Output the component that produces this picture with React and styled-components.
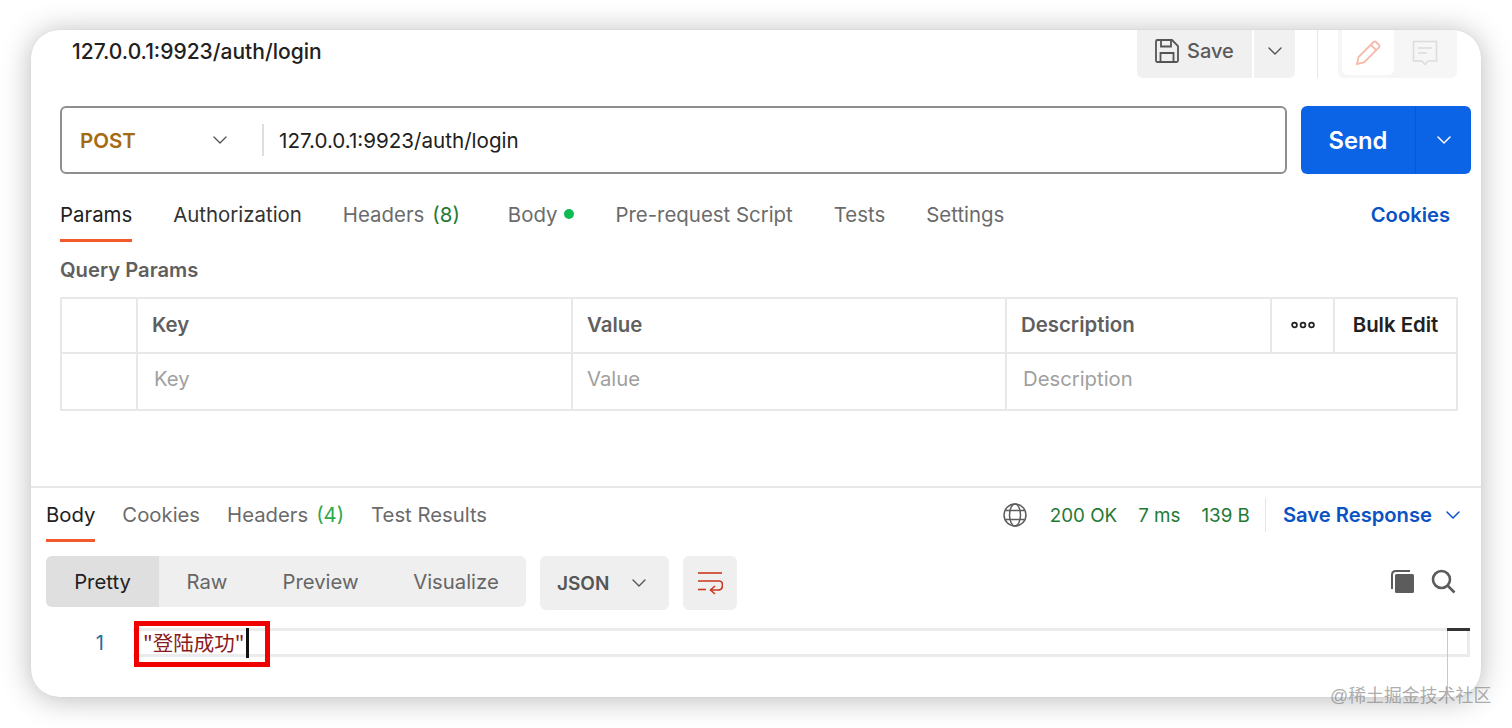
import styled, { createGlobalStyle } from "styled-components";
import { ChevronDown } from "lucide-react";

const GlobalStyle = createGlobalStyle`
  html, body {
    margin: 0;
    padding: 0;
    background: #fff;
    height: 100%;
  }
  body {
    font-family: Inter, "Noto Sans CJK SC", sans-serif;
    overflow: hidden;
  }
`;

const Page = styled.div`
  position: relative;
  width: 1512px;
  height: 728px;
  padding: 30px 31px 31px;
  box-sizing: border-box;
`;

const Card = styled.div`
  position: relative;
  height: 667px;
  background: #fff;
  border-radius: 28px;
  box-shadow: 0 0 1px rgba(0, 0, 0, 0.12), 0 2px 30px rgba(0, 0, 0, 0.28);
  display: flex;
  flex-direction: column;
`;

const TitleBar = styled.div`
  height: 76px;
  display: flex;
  align-items: flex-start;
  padding: 0 24px 0 41px;
`;

const Title = styled.div`
  font-size: 21px;
  font-weight: 500;
  color: #212121;
  line-height: 44px;
  flex: 1;
`;

const SaveGroup = styled.div`
  display: flex;
  gap: 2px;
  height: 48px;
`;

const SaveBtn = styled.div`
  width: 115px;
  background: #f0f0f0;
  border-radius: 0 0 0 6px;
  display: flex;
  align-items: center;
  padding: 0 0 6px 17px;
  box-sizing: border-box;
  gap: 7px;
  font-size: 20px;
  font-weight: 500;
  color: #5a5a5a;
`;

const SaveArrow = styled.div`
  width: 41px;
  background: #f1f1f1;
  border-radius: 0 0 6px 0;
  display: flex;
  align-items: center;
  justify-content: center;
  padding-bottom: 6px;
  box-sizing: border-box;
  color: #555;
`;

const VSep = styled.div`
  width: 1px;
  height: 48px;
  background: #e6e6e6;
  margin: 0 20px 0 22px;
`;

const IconTray = styled.div`
  width: 119px;
  height: 48px;
  background: #f6f6f6;
  border-radius: 0 0 6px 6px;
  display: flex;
  padding-left: 4px;
  box-sizing: border-box;
`;

const IconCell = styled.div`
  width: 53px;
  height: 45px;
  background: ${(p) => (p.$active ? "#fff" : "transparent")};
  border-radius: 0 0 6px 6px;
  display: flex;
  align-items: center;
  justify-content: center;
  margin-right: 6px;
`;

const RequestRow = styled.div`
  display: flex;
  gap: 14px;
  padding: 0 10px 0 29px;
  height: 68px;
`;

const UrlBox = styled.div`
  flex: 1;
  border: 2px solid #8f8f8f;
  border-radius: 6px;
  display: flex;
  align-items: center;
  box-sizing: border-box;
`;

const Method = styled.div`
  width: 202px;
  padding-left: 18px;
  box-sizing: border-box;
  display: flex;
  align-items: center;
  justify-content: space-between;
  padding-right: 30px;
  font-size: 20.5px;
  font-weight: 600;
  color: #a46a12;
  border-right: 2px solid #dedede;
  height: 32px;
`;

const UrlText = styled.div`
  padding-left: 15px;
  font-size: 20.6px;
  color: #212121;
`;

const SendBtn = styled.div`
  width: 170px;
  background: #0b63e5;
  border-radius: 6px;
  color: #fff;
  display: flex;
  font-size: 23.8px;
  font-weight: 600;
`;

const SendLabel = styled.div`
  width: 114px;
  display: flex;
  align-items: center;
  justify-content: center;
  border-right: 1px solid #0a58cc;
`;

const SendArrow = styled.div`
  flex: 1;
  display: flex;
  align-items: center;
  justify-content: center;
`;

const ReqTabs = styled.div`
  height: 68px;
  display: flex;
  padding: 0 31px 0 29px;
  font-size: 20.4px;
`;

const TabList = styled.div`
  display: flex;
  flex: 1;
  gap: ${(p) => p.$gap}px;
`;

const Tab = styled.div`
  position: relative;
  display: flex;
  align-items: center;
  gap: ${(p) => p.$gap || 0}px;
  height: 68px;
  padding-top: 18px;
  padding-bottom: 6px;
  box-sizing: border-box;
  color: ${(p) => (p.$on ? "#212121" : p.$mid ? "#333" : "#6b6b6b")};
  margin-right: ${(p) => p.$mr || 0}px;
  ${(p) =>
    p.$on &&
    `&::after {
      content: "";
      position: absolute;
      left: 0;
      right: 0;
      bottom: 0;
      height: 3px;
      background: #f4592c;
    }`}
`;

const Count = styled.span`
  color: ${(p) => p.$c};
`;

const Dot = styled.span`
  width: 10px;
  height: 10px;
  border-radius: 50%;
  background: #0cbb52;
`;

const CookiesLink = styled.div`
  display: flex;
  align-items: center;
  padding-top: 18px;
  padding-bottom: 6px;
  color: #0b52c4;
  font-weight: 600;
  font-size: 20.2px;
`;

const SectionLabel = styled.div`
  padding: 16px 0 0 29px;
  height: 55px;
  box-sizing: border-box;
  font-size: 20.2px;
  font-weight: 600;
  color: #5f5f5f;
  line-height: 24px;
`;

const Table = styled.div`
  margin: 0 23px 0 29px;
  border: 2px solid #e8e8e8;
  display: grid;
  grid-template-columns: 76px 435px 434px 265px 63px 1fr;
  grid-template-rows: 55px 55px;
  box-sizing: border-box;
  height: 114px;
`;

const HeadCell = styled.div`
  display: flex;
  align-items: center;
  padding: 0 0 2px ${(p) => p.$pl ?? 14}px;
  box-sizing: border-box;
  border-right: ${(p) => (p.$last ? "none" : "2px solid #e8e8e8")};
  border-bottom: 2px solid #e8e8e8;
  font-size: 20.4px;
  font-weight: 600;
  color: ${(p) => p.$c || "#5f5f5f"};
  justify-content: ${(p) => (p.$center ? "center" : "flex-start")};
`;

const BodyCell = styled.div`
  display: flex;
  align-items: center;
  padding: 0 0 6px ${(p) => p.$pl ?? 14}px;
  box-sizing: border-box;
  border-right: ${(p) => (p.$last ? "none" : "2px solid #e8e8e8")};
  grid-column: ${(p) => p.$span || "auto"};
  font-size: 20.3px;
  color: #a0a0a0;
`;

const Spacer = styled.div`
  height: 75px;
  flex-shrink: 0;
`;

const ResponseHead = styled.div`
  border-top: 2px solid #e8e8e8;
  height: 54px;
  display: flex;
  padding: 0 31px 0 15px;
  font-size: 20.3px;
`;

const RespTab = styled(Tab)`
  height: 54px;
  padding: 0 0 1px;
`;

const RespStats = styled.div`
  display: flex;
  align-items: center;
  color: #1f7a35;
  font-size: 18.8px;
  height: 54px;
`;

const Stat = styled.span`
  margin-left: ${(p) => p.$ml}px;
`;

const StatSep = styled.div`
  width: 1px;
  height: 34px;
  background: #e4e4e4;
  margin: 0 17px 0 15px;
`;

const SaveResponse = styled.div`
  color: #0b52c4;
  font-weight: 600;
  font-size: 20.2px;
  display: flex;
  align-items: center;
  gap: 9px;
  margin-right: -15px;
  padding-bottom: 1px;
`;

const Toolbar = styled.div`
  margin-top: 14px;
  height: 54px;
  display: flex;
  align-items: flex-start;
  padding: 0 25px 0 15px;
`;

const Segmented = styled.div`
  display: flex;
  height: 51px;
  width: 480px;
  background: #efefef;
  border-radius: 6px;
  overflow: hidden;
  font-size: 20.3px;
  color: #666;
`;

const Segment = styled.div`
  width: ${(p) => p.$w}px;
  background: ${(p) => (p.$on ? "#dfdfdf" : "transparent")};
  color: ${(p) => (p.$on ? "#212121" : "#666")};
  display: flex;
  align-items: center;
  justify-content: center;
`;

const JsonSelect = styled.div`
  margin-left: 14px;
  width: 129px;
  height: 54px;
  background: #efefef;
  border-radius: 6px;
  display: flex;
  align-items: center;
  justify-content: space-between;
  padding: 0 18px 0 17px;
  box-sizing: border-box;
  font-size: 19px;
  font-weight: 600;
  color: #555;
`;

const WrapBtn = styled.div`
  margin-left: 14px;
  width: 54px;
  height: 54px;
  background: #efefef;
  border-radius: 6px;
  display: flex;
  align-items: center;
  justify-content: center;
`;

const ToolIcons = styled.div`
  margin-left: auto;
  display: flex;
  gap: 16px;
  height: 50px;
  align-items: center;
`;

const Editor = styled.div`
  position: relative;
  margin-top: 18px;
  display: flex;
  height: 29px;
  padding-right: 11px;
`;

const LineNo = styled.div`
  width: 102px;
  padding-right: 29px;
  box-sizing: border-box;
  text-align: right;
  font-size: 20px;
  line-height: 31px;
  color: #21709a;
  flex-shrink: 0;
`;

const CodeLine = styled.div`
  flex: 1;
  border: solid #ebebeb;
  border-width: 3px 3px 3px 0;
  display: flex;
  align-items: center;
  padding-left: 10px;
  color: #8b1a1a;
  box-sizing: border-box;
`;

const CodeText = styled.span`
  font-family: "Noto Sans CJK SC", sans-serif;
  font-size: 20.5px;
  line-height: 23px;
`;

const Caret = styled.span`
  position: absolute;
  left: 215px;
  top: 0;
  width: 3px;
  height: 30px;
  background: #111;
`;

const RedBox = styled.div`
  position: absolute;
  left: 103px;
  top: -7px;
  width: 136px;
  height: 46px;
  border: 5px solid #f10000;
  box-sizing: border-box;
`;

const ScrollTick = styled.div`
  position: absolute;
  right: 11px;
  top: 0;
  width: 23px;
  height: 3px;
  background: #333;
`;

const ScrollLine = styled.div`
  position: absolute;
  right: 33px;
  top: 3px;
  width: 1px;
  height: 60px;
  background: #c9c9c9;
`;

const Watermark = styled.div`
  position: absolute;
  left: 1330px;
  top: 684px;
  font-size: 17.9px;
  line-height: 24px;
  color: rgba(120, 120, 120, 0.62);
  font-family: "Liberation Sans", "Noto Sans CJK SC", sans-serif;
  white-space: nowrap;
`;

function SaveIcon() {
  return (
    <svg width="26" height="26" viewBox="0 0 26 26" fill="none" stroke="#555" strokeWidth="1.8">
      <path d="M2 3.5 a1.5 1.5 0 0 1 1.5-1.5 H18 L24 8 V22.5 a1.5 1.5 0 0 1-1.5 1.5 H3.5 A1.5 1.5 0 0 1 2 22.5 Z" />
      <path d="M7 2 V8.5 H17 V2" />
      <path d="M6.5 24 V15 H19.5 V24" />
    </svg>
  );
}

function PencilIcon() {
  return (
    <svg width="26" height="26" viewBox="0 0 26 26" fill="none" stroke="#f7b9aa" strokeWidth="1.8">
      <path d="M2 24 L3.5 17 L18.5 2 Q20 1 21 2 L24 5 Q25 6 24 7.5 L9 22.5 Z" />
      <path d="M16 5 L21 10" />
    </svg>
  );
}

function CommentIcon() {
  return (
    <svg width="26" height="26" viewBox="0 0 26 26" fill="none" stroke="#dcdcdc" strokeWidth="1.6">
      <path d="M1.5 1.5 H24.5 V21 H16 L13 24.5 L10 21 H1.5 Z" />
      <path d="M6 8 H20 M6 13 H15" />
    </svg>
  );
}

function DotsIcon() {
  return (
    <svg width="24" height="8" viewBox="0 0 24 8" fill="none" stroke="#222" strokeWidth="1.7">
      <circle cx="3.5" cy="4" r="2.4" />
      <circle cx="12" cy="4" r="2.4" />
      <circle cx="20.5" cy="4" r="2.4" />
    </svg>
  );
}

function GlobeIcon() {
  return (
    <svg width="24" height="24" viewBox="0 0 24 24" fill="none" stroke="#5c5c5c" strokeWidth="1.5">
      <circle cx="12" cy="12" r="11" />
      <ellipse cx="12" cy="12" rx="5.5" ry="11" />
      <path d="M2.5 7.5 H21.5 M2.5 16.5 H21.5" />
    </svg>
  );
}

function WrapIcon() {
  return (
    <svg width="26" height="24" viewBox="0 0 26 24" fill="none" stroke="#c8391f" strokeWidth="1.6">
      <path d="M1 2 H25" />
      <path d="M1 10 H22 Q25.5 10 25.5 14 Q25.5 19 21 19 H14" />
      <path d="M1 18.5 H9" />
      <path d="M18 15 L13.5 19 L18 23" />
    </svg>
  );
}

function CopyIcon() {
  return (
    <svg width="25" height="25" viewBox="0 0 25 25">
      <path d="M6 1 H20 V3 H6 Q3 3 3 6 V20 H1 V6 Q1 1 6 1 Z" fill="#5c5c5c" />
      <rect x="5" y="5" width="19" height="19" rx="1.5" fill="#5c5c5c" />
    </svg>
  );
}

function SearchIcon() {
  return (
    <svg width="25" height="25" viewBox="0 0 25 25" fill="none" stroke="#5c5c5c" strokeWidth="2.6">
      <circle cx="10.5" cy="10.5" r="8.5" />
      <path d="M16.5 16.5 L23.5 23.5" />
    </svg>
  );
}

export default function App() {
  return (
    <>
      <GlobalStyle />
      <Page>
        <Card>
          <TitleBar>
            <Title>127.0.0.1:9923/auth/login</Title>
            <SaveGroup>
              <SaveBtn>
                <SaveIcon />
                Save
              </SaveBtn>
              <SaveArrow>
                <ChevronDown size={24} strokeWidth={1.4} />
              </SaveArrow>
            </SaveGroup>
            <VSep />
            <IconTray>
              <IconCell $active>
                <PencilIcon />
              </IconCell>
              <IconCell>
                <CommentIcon />
              </IconCell>
            </IconTray>
          </TitleBar>

          <RequestRow>
            <UrlBox>
              <Method>
                POST
                <ChevronDown size={24} strokeWidth={1.4} color="#555" />
              </Method>
              <UrlText>127.0.0.1:9923/auth/login</UrlText>
            </UrlBox>
            <SendBtn>
              <SendLabel>Send</SendLabel>
              <SendArrow>
                <ChevronDown size={24} strokeWidth={1.5} />
              </SendArrow>
            </SendBtn>
          </RequestRow>

          <ReqTabs>
            <TabList $gap={41}>
              <Tab $on>Params</Tab>
              <Tab $mid>Authorization</Tab>
              <Tab $gap={8} $mr={7}>
                Headers <Count $c="#1f7a35">(8)</Count>
              </Tab>
              <Tab $gap={7}>
                Body <Dot />
              </Tab>
              <Tab>Pre-request Script</Tab>
              <Tab>Tests</Tab>
              <Tab>Settings</Tab>
            </TabList>
            <CookiesLink>Cookies</CookiesLink>
          </ReqTabs>

          <SectionLabel>Query Params</SectionLabel>

          <Table>
            <HeadCell />
            <HeadCell>Key</HeadCell>
            <HeadCell>Value</HeadCell>
            <HeadCell>Description</HeadCell>
            <HeadCell $pl={0} $center>
              <DotsIcon />
            </HeadCell>
            <HeadCell $last $pl={0} $center $c="#212121">
              Bulk Edit
            </HeadCell>
            <BodyCell />
            <BodyCell $pl={16}>Key</BodyCell>
            <BodyCell>Value</BodyCell>
            <BodyCell $last $span="4 / 7" $pl={16}>
              Description
            </BodyCell>
          </Table>

          <Spacer />

          <ResponseHead>
            <TabList $gap={27}>
              <RespTab $on>Body</RespTab>
              <RespTab>Cookies</RespTab>
              <RespTab $gap={8}>
                Headers <Count $c="#2fa84f">(4)</Count>
              </RespTab>
              <RespTab>Test Results</RespTab>
            </TabList>
            <RespStats>
              <GlobeIcon />
              <Stat $ml={23}>200 OK</Stat>
              <Stat $ml={21}>7 ms</Stat>
              <Stat $ml={21}>139 B</Stat>
              <StatSep />
              <SaveResponse>
                Save Response
                <ChevronDown size={24} strokeWidth={1.5} />
              </SaveResponse>
            </RespStats>
          </ResponseHead>

          <Toolbar>
            <Segmented>
              <Segment $on $w={113}>Pretty</Segment>
              <Segment $w={96}>Raw</Segment>
              <Segment $w={131}>Preview</Segment>
              <Segment $w={140}>Visualize</Segment>
            </Segmented>
            <JsonSelect>
              JSON
              <ChevronDown size={24} strokeWidth={1.4} />
            </JsonSelect>
            <WrapBtn>
              <WrapIcon />
            </WrapBtn>
            <ToolIcons>
              <CopyIcon />
              <SearchIcon />
            </ToolIcons>
          </Toolbar>

          <Editor>
            <LineNo>1</LineNo>
            <CodeLine>
              <CodeText>"登陆成功"</CodeText>
            </CodeLine>
            <Caret />
            <RedBox />
            <ScrollTick />
            <ScrollLine />
          </Editor>
        </Card>
        <Watermark>@稀土掘金技术社区</Watermark>
      </Page>
    </>
  );
}
